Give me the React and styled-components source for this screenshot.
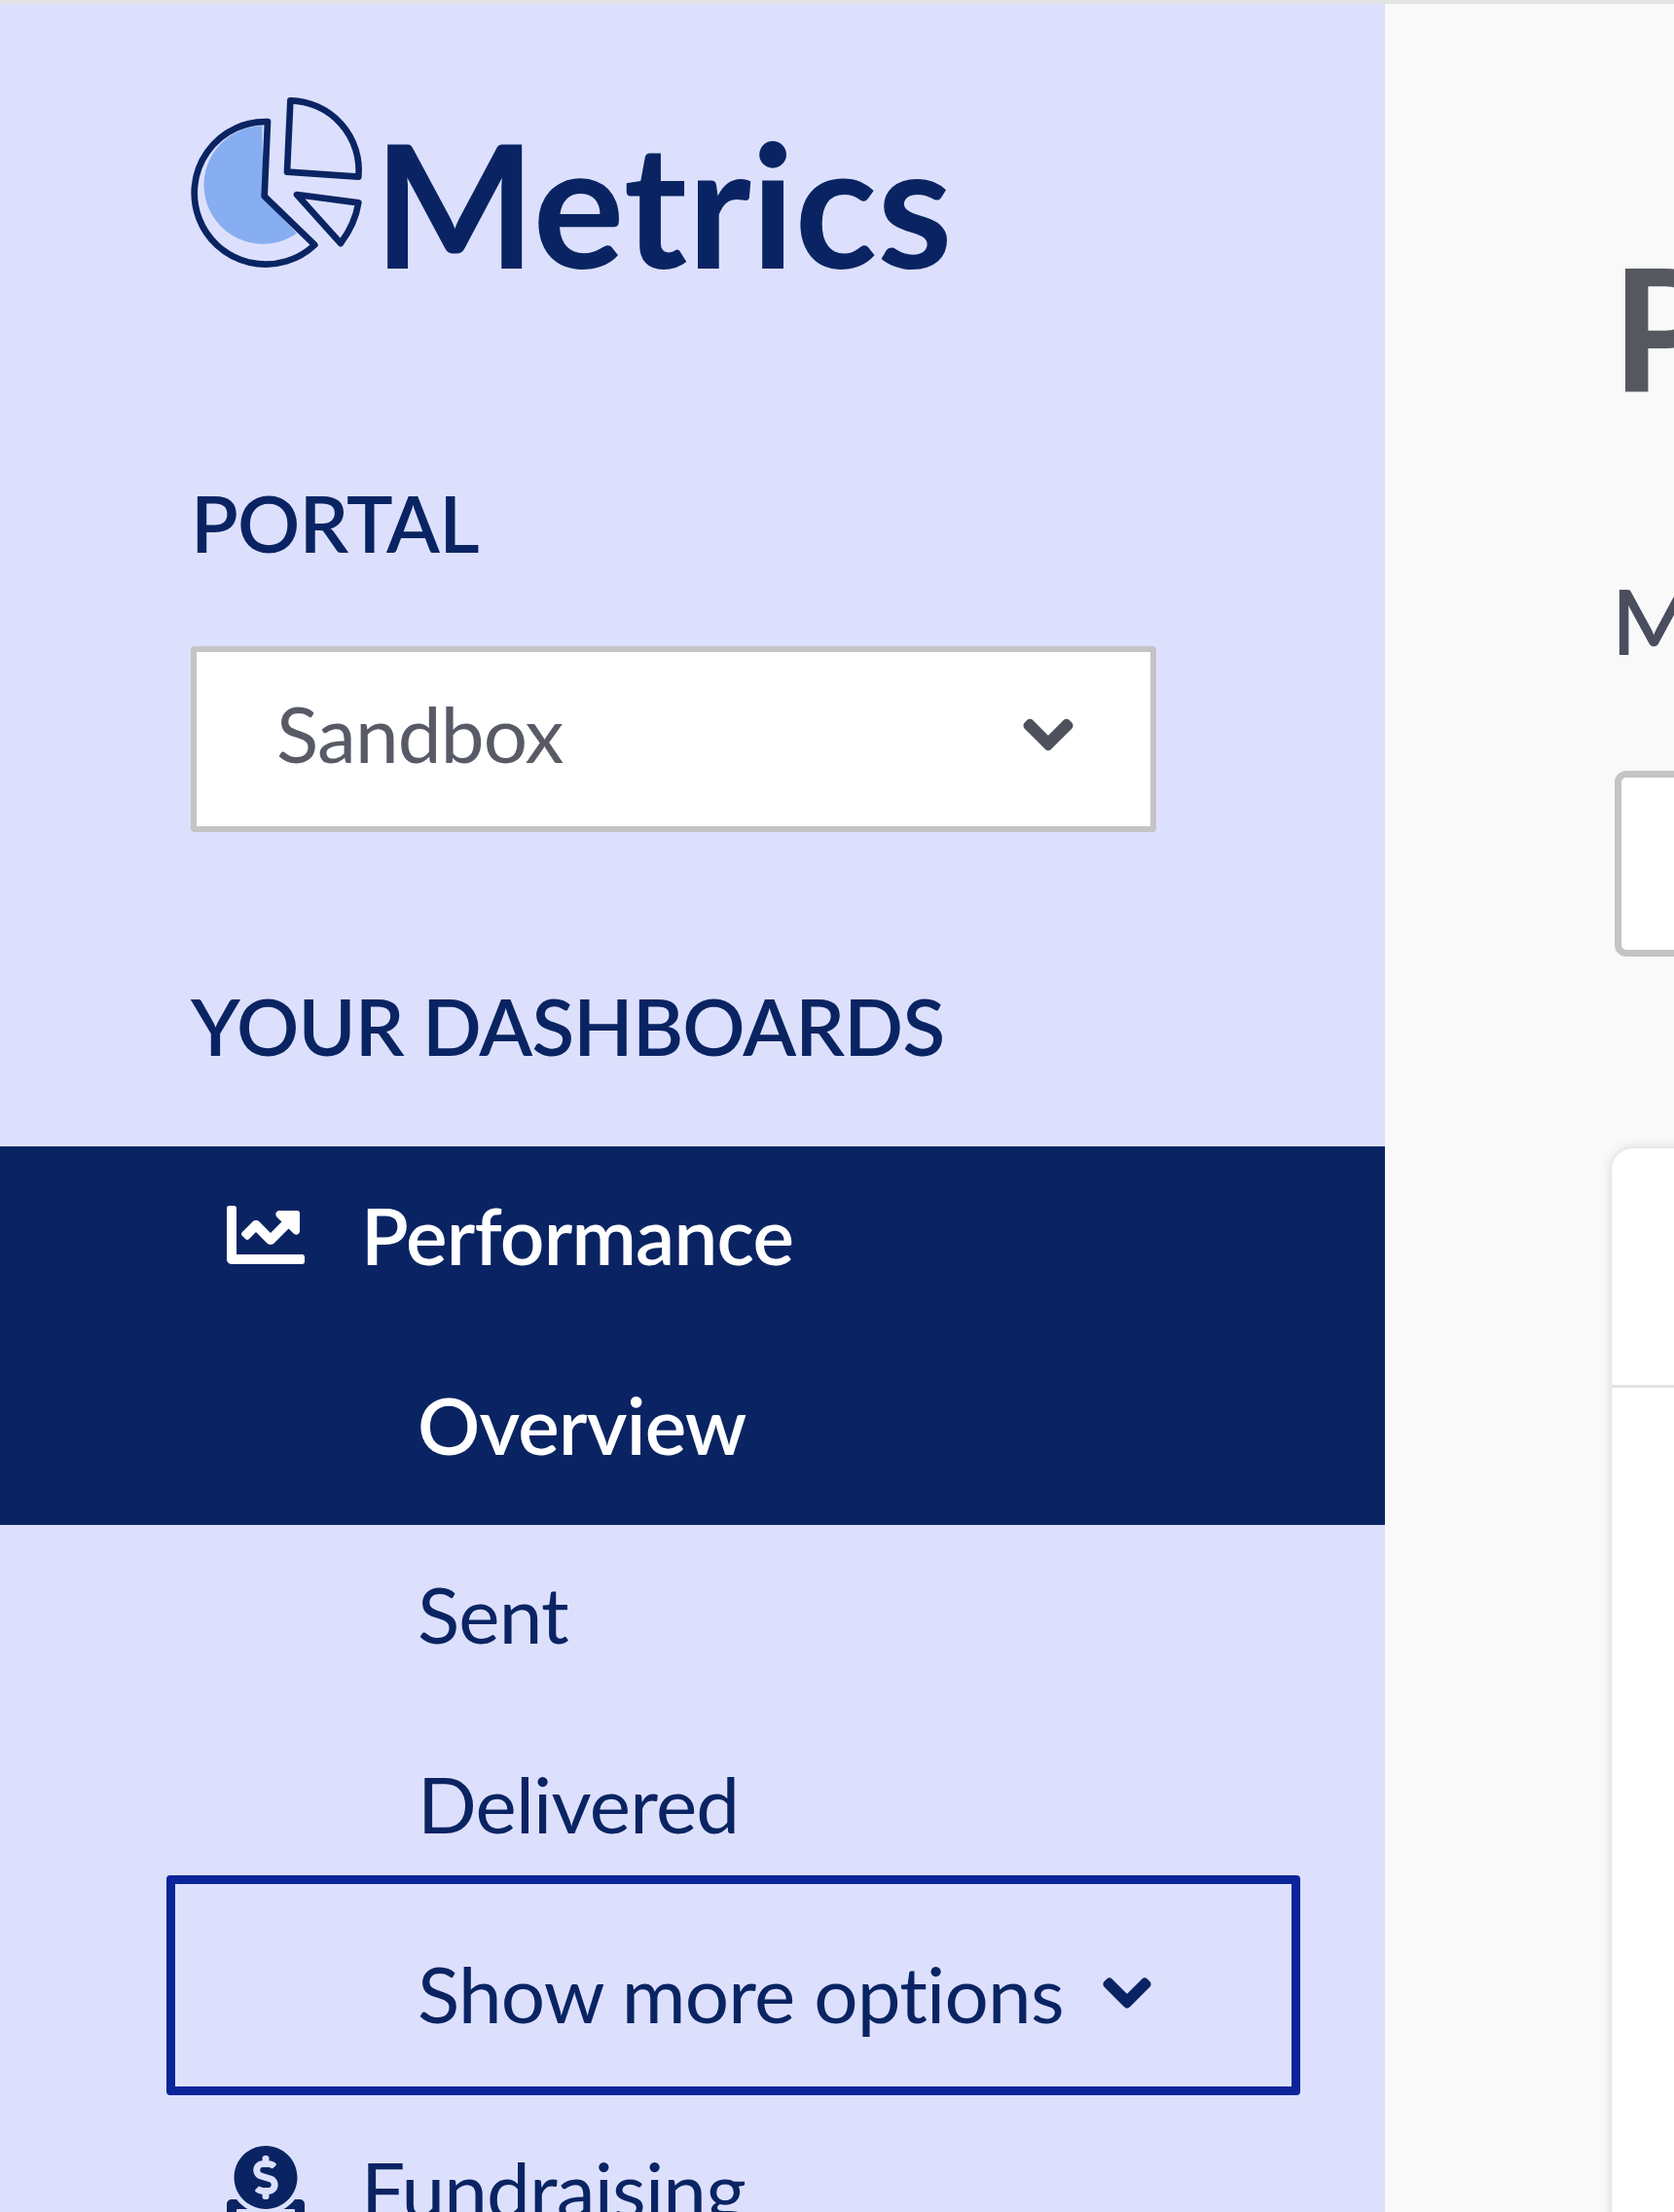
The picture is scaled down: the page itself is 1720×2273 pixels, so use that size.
import React from 'react'
import styled, { createGlobalStyle } from 'styled-components'
import { FaChartLine, FaChevronDown, FaDonate } from 'react-icons/fa'

const GlobalStyle = createGlobalStyle`
    html, body {
        margin: 0;
        padding: 0;
        background: #f9f9f9;
    }
    * {
        box-sizing: border-box;
    }
`

const Page = styled.div`
    display: grid;
    grid-template-columns: 1423px 1fr;
    width: 1720px;
    height: 2273px;
    overflow: hidden;
    border-top: 4px solid #e3e3e3;
    font-family: Lato, "Open Sans", sans-serif;
    font-size: 80px;
    line-height: 96px;
    letter-spacing: -0.8px;
`

const Sidebar = styled.nav`
    display: flex;
    flex-direction: column;
    background: #dde0fd;
    color: #0a2463;
`
const Brand = styled.div`
    display: flex;
    align-items: flex-start;
    height: 200px;
    margin: 86px 0 0 180px;
`
const BrandName = styled.span`
    margin: 18px 0 0 -6px;
    font-size: 176px;
    line-height: 200px;
    font-weight: 700;
    letter-spacing: 0;
`
const SectionLabel = styled.div`
    margin: ${props => props.$top}px 0 0 196px;
    font-weight: 600;
`
const PortalSelect = styled.div`
    display: flex;
    align-items: center;
    justify-content: space-between;
    width: 992px;
    height: 191px;
    margin: 79px 0 151px 196px;
    padding: 0 77px 14px 82px;
    background: #fff;
    border: 6px solid #c4c4c4;
    border-radius: 4px;
    color: #585b66;
    & svg {
        margin-top: 4px;
    }
`
const NavList = styled.ul`
    list-style: none;
    margin: 76px 0 0;
    padding: 0;
`
const ActiveGroup = styled.div`
    background: #0a2463;
    color: #fff;
`
const NavRow = styled.li`
    display: flex;
    align-items: flex-start;
    gap: 58px;
    height: 194.5px;
    padding-left: 233px;
    line-height: 182px;
    font-weight: ${props => props.$active ? 600 : 400};
    & svg {
        flex: none;
        margin-top: ${props => props.$iconTop}px;
    }
`
const SubRow = styled.li`
    height: 194.5px;
    padding-left: 429px;
    line-height: 182px;
    font-weight: ${props => props.$active ? 600 : 400};
`
const ShowMore = styled.button`
    display: flex;
    align-items: flex-start;
    gap: 38px;
    width: 1165px;
    height: 226px;
    margin: -29px 0 5px 171px;
    padding: 21px 0 0 249px;
    background: none;
    border: 9px solid #0a2499;
    border-radius: 4px;
    font: inherit;
    letter-spacing: inherit;
    line-height: 182px;
    color: inherit;
    & svg {
        margin-top: 64px;
    }
`

const Content = styled.main`
    display: flex;
    flex-direction: column;
    padding: 227px 0 0 233px;
    white-space: nowrap;
    overflow: hidden;
    color: #55585f;
`
const Title = styled.h1`
    margin: 0;
    font-size: 174px;
    line-height: 208px;
    font-weight: 700;
`
const FieldLabel = styled.label`
    margin-top: 144px;
    font-size: 92px;
    line-height: 110px;
    font-weight: 600;
    color: #4a4d5e;
`
const MetricField = styled.div`
    flex: none;
    width: 900px;
    height: 191px;
    margin: 99px 0 0 3px;
    background: #fff;
    border: 7px solid #c4c4c4;
    border-radius: 12px;
`
const Card = styled.section`
    flex: none;
    width: 900px;
    height: 1200px;
    margin-top: 197px;
    background: #fff;
    border-radius: 22px 0 0 0;
    box-shadow: 0 0 12px rgba(0, 0, 0, 0.16);
`
const CardHeader = styled.div`
    height: 246px;
    border-bottom: 3px solid #e2e2e2;
`

const LogoMark = () => (
    <svg width="210" height="200" viewBox="0 0 630 600" fill="none" aria-hidden="true">
        <path d="M268 118A182 182 0 1 0 375 449L272 340Z" fill="#86aef0" />
        <g stroke="#0a2463" strokeWidth="20" strokeLinejoin="round">
            <path d="M285 105A220 220 0 1 0 430 485L275 335Z" />
            <path d="M355 40A215 215 0 0 1 565 275L345 260Z" />
            <path d="M375 330L565 355Q555 420 510 480Z" />
        </g>
    </svg>
)

const Chevron = styled(FaChevronDown)`
    stroke: currentColor;
    stroke-width: 30px;
`

const App = () => {
    return (
        <>
            <GlobalStyle />
            <Page>
                <Sidebar>
                    <Brand>
                        <LogoMark />
                        <BrandName>Metrics</BrandName>
                    </Brand>
                    <SectionLabel $top={199}>PORTAL</SectionLabel>
                    <PortalSelect>
                        Sandbox
                        <Chevron size={56} color="#4f525c" />
                    </PortalSelect>
                    <SectionLabel $top={0}>YOUR DASHBOARDS</SectionLabel>
                    <NavList>
                        <ActiveGroup>
                            <NavRow $active $iconTop={51}>
                                <FaChartLine size={80} />
                                Performance
                            </NavRow>
                            <SubRow $active>Overview</SubRow>
                        </ActiveGroup>
                        <SubRow>Sent</SubRow>
                        <SubRow>Delivered</SubRow>
                        <ShowMore>
                            Show more options
                            <Chevron size={54} />
                        </ShowMore>
                        <NavRow $iconTop={47}>
                            <FaDonate size={80} />
                            Fundraising
                        </NavRow>
                    </NavList>
                </Sidebar>
                <Content>
                    <Title>Performance</Title>
                    <FieldLabel>Metric</FieldLabel>
                    <MetricField />
                    <Card>
                        <CardHeader />
                    </Card>
                </Content>
            </Page>
        </>
    )
}

export default App
